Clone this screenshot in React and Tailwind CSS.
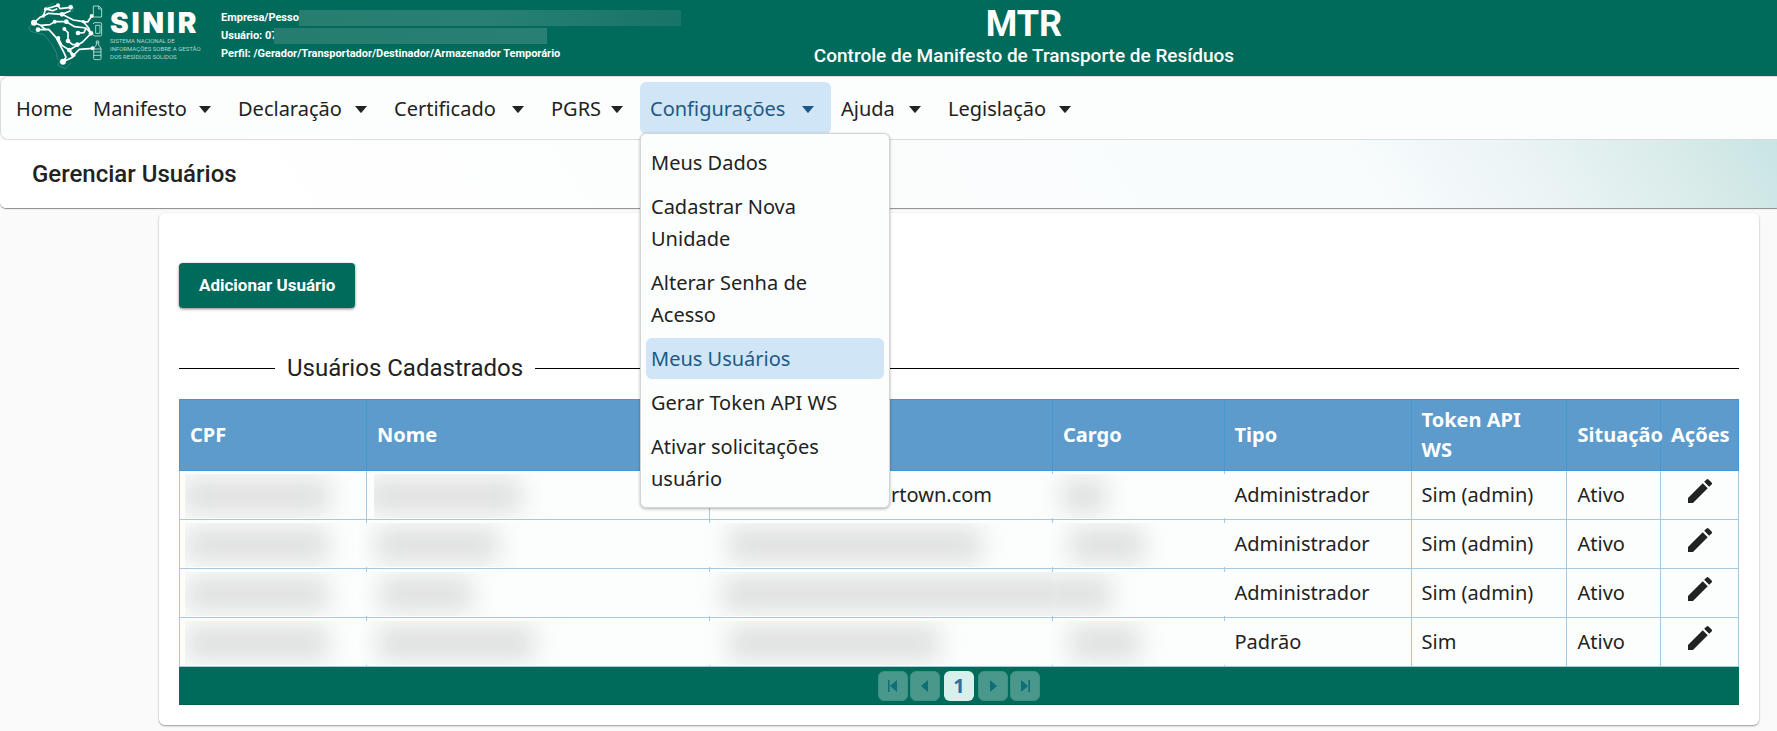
import { MdEdit } from "react-icons/md";

const navItems = [
  { label: "Manifesto", width: "w-[145px]" },
  { label: "Declaração", width: "w-[156px]" },
  { label: "Certificado", width: "w-[157px]" },
  { label: "PGRS", width: "w-[99px]" },
  {
    label: "Configurações",
    width: "w-[191px]",
    active: true,
    items: [
      { label: "Meus Dados" },
      { label: "Cadastrar Nova Unidade" },
      { label: "Alterar Senha de Acesso" },
      { label: "Meus Usuários", selected: true },
      { label: "Gerar Token API WS" },
      { label: "Ativar solicitações usuário" },
    ],
  },
  { label: "Ajuda", width: "w-[107px]" },
  { label: "Legislação", width: "w-[150px]" },
];

const columns = [
  { label: "CPF", width: "w-[12%]" },
  { label: "Nome", width: "w-[22%]" },
  { label: "", width: "w-[22%]" },
  { label: "Cargo", width: "w-[11%]" },
  { label: "Tipo", width: "w-[12%]" },
  { label: "Token API WS", width: "w-[10%]" },
  { label: "Situação", width: "w-[6%]" },
  { label: "Ações", width: "w-[5%]" },
];

// Each mask is [box, blob]: the covering box, then the grey smudge inside it.
const cpfMask = ["left-[5px] w-[172px]", "-left-1 w-[150px]"];
const cpfWide = ["left-[5px] w-[184px]", "left-0 w-[144px]"];

const rows = [
  {
    cpf: cpfMask,
    nome: ["left-[7px] w-[180px]", "-left-2 w-[156px]"],
    email: "rtown.com",
    cargo: ["-left-[14px] w-[200px]", "left-[22px] w-[46px]"],
    tipo: "Administrador",
    token: "Sim (admin)",
  },
  {
    cpf: cpfWide,
    nome: ["-left-[8px] w-[180px]", "left-[16px] w-[124px]"],
    email: ["-left-[24px] w-[320px]", "left-[42px] w-[254px]"],
    cargo: ["-left-[14px] w-[200px]", "left-[30px] w-[76px]"],
    tipo: "Administrador",
    token: "Sim (admin)",
  },
  {
    cpf: cpfWide,
    nome: ["-left-[8px] w-[150px]", "left-[20px] w-[94px]"],
    email: ["-left-[24px] w-[368px]", "left-[36px] w-[368px]"],
    cargo: ["-left-[1px] w-[187px]", "-left-[16px] w-[76px]"],
    tipo: "Administrador",
    token: "Sim (admin)",
  },
  {
    cpf: cpfWide,
    nome: ["-left-[8px] w-[210px]", "left-[18px] w-[158px]"],
    email: ["-left-[24px] w-[320px]", "left-[42px] w-[212px]"],
    cargo: ["-left-[14px] w-[200px]", "left-[30px] w-[72px]"],
    tipo: "Padrão",
    token: "Sim",
  },
];

function Caret() {
  return (
    <svg viewBox="0 0 12 7" className="h-[7px] w-3 shrink-0 fill-current" aria-hidden="true">
      <path d="M0 0h12L6.600 6.500a.8.8 0 0 1-1.200 0z" />
    </svg>
  );
}

function Masked({ mask }) {
  return (
    <span className={`absolute top-[3px] h-11 overflow-hidden bg-[#fcfefd] ${mask[0]}`}>
      <span className={`absolute top-1 h-9 rounded-lg bg-[#dfe0e0] blur-[12px] ${mask[1]}`} />
    </span>
  );
}

function MapLogo() {
  const dots = [
    [112, 16, 6], [150, 22, 7], [75, 27, 5], [68, 48, 5], [124, 43, 7], [40, 68, 9], [52, 89, 7],
    [102, 65, 6], [137, 65, 7], [188, 65, 5], [213, 48, 6], [131, 87, 6], [172, 99, 7], [211, 100, 7],
    [113, 114, 6], [142, 123, 7], [170, 134, 7], [146, 150, 7], [159, 165, 6], [127, 185, 9], [216, 145, 6],
  ];
  return (
    <svg viewBox="22 0 228 222" className="h-[74px] w-[76px]" fill="none" aria-hidden="true">
      <path
        d="M40 68 24 82 30 94 70 104 92 130 108 160 110 176 118 182 112 196 134 206 150 190 M60 40 76 22 98 10 M150 12 160 26 154 36"
        stroke="#4f958a"
        strokeWidth="2"
      />
      <path
        d="M40 68 58 52 68 48 75 27 112 16 M112 16 118 26 150 22 M68 48 84 40 124 43 158 60 188 65 201 66 213 48 M75 27 96 32 110 26 M124 43 150 32 M52 89 84 88 106 112 130 158 136 172 127 185 M40 68 60 76 88 74 102 65 137 65 162 80 196 84 211 100 M131 87 142 98 142 123 M113 114 124 136 146 150 M142 123 156 134 170 134 M172 99 190 98 196 84 M60 76 76 90 M188 65 204 84 211 100 186 126 146 150 M146 150 159 165 176 148 216 145 M146 150 156 172 127 185"
        stroke="white"
        strokeWidth="5"
        strokeLinejoin="round"
      />
      {dots.map(([x, y, r]) => (
        <circle key={`${x}-${y}`} cx={x} cy={y} r={r} fill="white" />
      ))}
      <g stroke="#cfe4e0" strokeWidth="2.5">
        <path d="M218 18h17l8 8v25h-25zM234 18v9h9" />
        <path d="M218 72q0-4 4-4h17q4 0 4 4v32q0 4-4 4h-17q-4 0-4-4M225 76h13v24h-13z" />
        <path d="M227 123h7v12l7 10v30q0 4-4 4h-14q-4 0-4-4v-30l8-10zM227 129h7M219 147h22M219 156h22M219 166h22" />
      </g>
    </svg>
  );
}

function PagerButton({ label, children }) {
  return (
    <button
      type="button"
      aria-label={label}
      className="flex size-[30px] items-center justify-center rounded-md border border-[#408f85] bg-[#4a978c] text-[#0f6e7a]"
    >
      <svg viewBox="0 0 14 14" className="size-3.5 fill-current" aria-hidden="true">
        {children}
      </svg>
    </button>
  );
}

function Header() {
  return (
    <header className="grid h-[76px] grid-cols-[193px_461px_684px_1fr] bg-[#006a5b] pl-7 text-white">
      <div className="flex">
        <MapLogo />
        <div className="flex flex-col pt-2.5 pl-1.5">
          <span className="font-['Inter','Liberation_Sans',sans-serif] text-[28px] leading-[27px] font-black tracking-widest">
            SINIR
          </span>
          <span className="text-[6px] leading-[8px] whitespace-nowrap text-[#b5d5cf] uppercase">
            Sistema Nacional de
            <br />
            Informações sobre a gestão
            <br />
            dos resíduos sólidos
          </span>
        </div>
      </div>
      <div className="pt-[9px] text-[11px] leading-[18px] font-bold whitespace-nowrap">
        <p className="flex items-center">
          Empresa/Pesso
          <span className="h-4 w-[382px] bg-linear-to-r from-[#267d70] via-[#288074] to-[#177467]" />
        </p>
        <p className="flex items-center">
          Usuário: 07
          <span className="-ml-1 h-4 w-[273px] bg-linear-to-r from-[#257c6f] to-[#288074]" />
        </p>
        <p>Perfil: /Gerador/Transportador/Destinador/Armazenador Temporário</p>
      </div>
      <div className="flex flex-col items-center whitespace-nowrap">
        <span className="pt-1 text-4xl leading-10 font-bold">MTR</span>
        <span className="text-[19px] leading-6 font-medium">Controle de Manifesto de Transporte de Resíduos</span>
      </div>
    </header>
  );
}

function Nav() {
  return (
    <nav className="flex h-16 items-start rounded-l-lg border border-r-0 border-[#dcdcdc] bg-[#fcfefd] px-[5px] pt-[5px] font-['Noto_Sans','Open_Sans',sans-serif] text-xl leading-8">
      <a href="#home" className="flex h-[52px] w-[77px] items-center pt-0.5 pl-2.5">
        Home
      </a>
      {navItems.map((item) => (
        <div key={item.label} className={`relative ${item.width}`}>
          <button
            type="button"
            aria-expanded={Boolean(item.active)}
            className={`flex h-[52px] w-full items-center justify-between rounded-md pt-0.5 pr-[17px] pl-2.5 ${
              item.active ? "bg-[#d0e5f5] text-[#1d5987]" : ""
            }`}
          >
            {item.label}
            <Caret />
          </button>
          {item.items && (
            <ul className="absolute top-[51px] left-0 z-20 flex w-[250px] flex-col gap-[3px] rounded-md border border-[#d5d5d5] bg-[#fcfefd] px-[5px] py-2 shadow-[0_1px_3px_rgba(0,0,0,0.3)]">
              {item.items.map((sub) => (
                <li key={sub.label}>
                  <a
                    href="#menu"
                    className={`block rounded-md pt-[5px] pr-4 pb-1 pl-[5px] ${sub.selected ? "bg-[#d0e5f5] text-[#1d5987]" : ""}`}
                  >
                    {sub.label}
                  </a>
                </li>
              ))}
            </ul>
          )}
        </div>
      ))}
    </nav>
  );
}

function UsersTable() {
  return (
    <table className="w-full table-fixed border-collapse bg-[#fcfefd] font-['Noto_Sans','Open_Sans',sans-serif] text-xl">
      <thead>
        <tr className="h-[71px] bg-[#5c9bcc] text-left leading-[30px] text-white">
          {columns.map((col, i) => (
            <th
              key={i}
              scope="col"
              className={`border border-[#4297d7] py-0 pl-2.5 font-bold ${i === 5 ? "pr-6" : "pr-0"} ${col.width}`}
            >
              {col.label}
            </th>
          ))}
        </tr>
      </thead>
      <tbody>
        {rows.map((row, i) => (
          <tr key={i} className="h-[49px]">
            {[row.cpf, row.nome, row.email, row.cargo, row.tipo, row.token, "Ativo"].map((cell, j) => (
              <td
                key={j}
                className={`relative border border-[#a6c9e2] p-0 ${j === 2 ? "pl-[181px]" : "pl-2.5"}`}
              >
                {Array.isArray(cell) ? <Masked mask={cell} /> : cell}
              </td>
            ))}
            <td className="border border-[#a6c9e2] p-0 pt-1 align-top">
              <button type="button" aria-label="Editar" className="mx-auto block">
                <MdEdit size={32} />
              </button>
            </td>
          </tr>
        ))}
      </tbody>
    </table>
  );
}

export default function App() {
  return (
    <div className="min-h-screen bg-[#fafafa] font-['Roboto','Liberation_Sans',sans-serif] text-[#222]">
      <Header />
      <Nav />
      <div className="flex h-[68px] items-center rounded-bl-md bg-[linear-gradient(57deg,#ffffff_10%,#fcfdfd_40%,#f8fcfd_76%,#ecf4f6_85%,#d6eae8_95%,#c8e4e5_100%)] pl-8 shadow-[0_1px_1px_rgba(0,0,0,0.45)]">
        <h1 className="text-2xl font-medium">Gerenciar Usuários</h1>
      </div>
      <main className="mt-[5px] mr-[18px] mb-1.5 ml-[159px] rounded-md bg-white px-5 pt-[50px] pb-5 shadow-[0_1px_2px_rgba(0,0,0,0.4)]">
        <button
          type="button"
          className="h-[45px] rounded bg-[#006a5b] px-5 text-[17px] font-bold text-white shadow-[0_1px_3px_rgba(0,0,0,0.5)]"
        >
          Adicionar Usuário
        </button>
        <div className="mt-11 mb-[15px] flex items-center">
          <span className="h-px w-24 bg-black" />
          <h2 className="px-3 text-2xl leading-8">Usuários Cadastrados</h2>
          <span className="h-px flex-1 bg-black" />
        </div>
        <UsersTable />
        <div className="flex h-[38px] items-center justify-center border-b border-[#045c50] bg-[#006a5b]">
          <div className="flex gap-0.5">
            <PagerButton label="Primeira página">
              <path d="M2 1h1.600v12H2zM11 1v12L4 7z" />
            </PagerButton>
            <PagerButton label="Página anterior">
              <path d="M10 1v12L3 7z" />
            </PagerButton>
            <button
              type="button"
              className="mx-0.5 size-[30px] rounded-md bg-[#d6f0ec] font-['Noto_Sans','Open_Sans',sans-serif] text-xl leading-[30px] font-bold text-[#2e6e9e]"
            >
              1
            </button>
            <PagerButton label="Próxima página">
              <path d="M4 1v12l7-6z" />
            </PagerButton>
            <PagerButton label="Última página">
              <path d="M10.400 1H12v12h-1.600zM3 1v12l7-6z" />
            </PagerButton>
          </div>
        </div>
      </main>
    </div>
  );
}
